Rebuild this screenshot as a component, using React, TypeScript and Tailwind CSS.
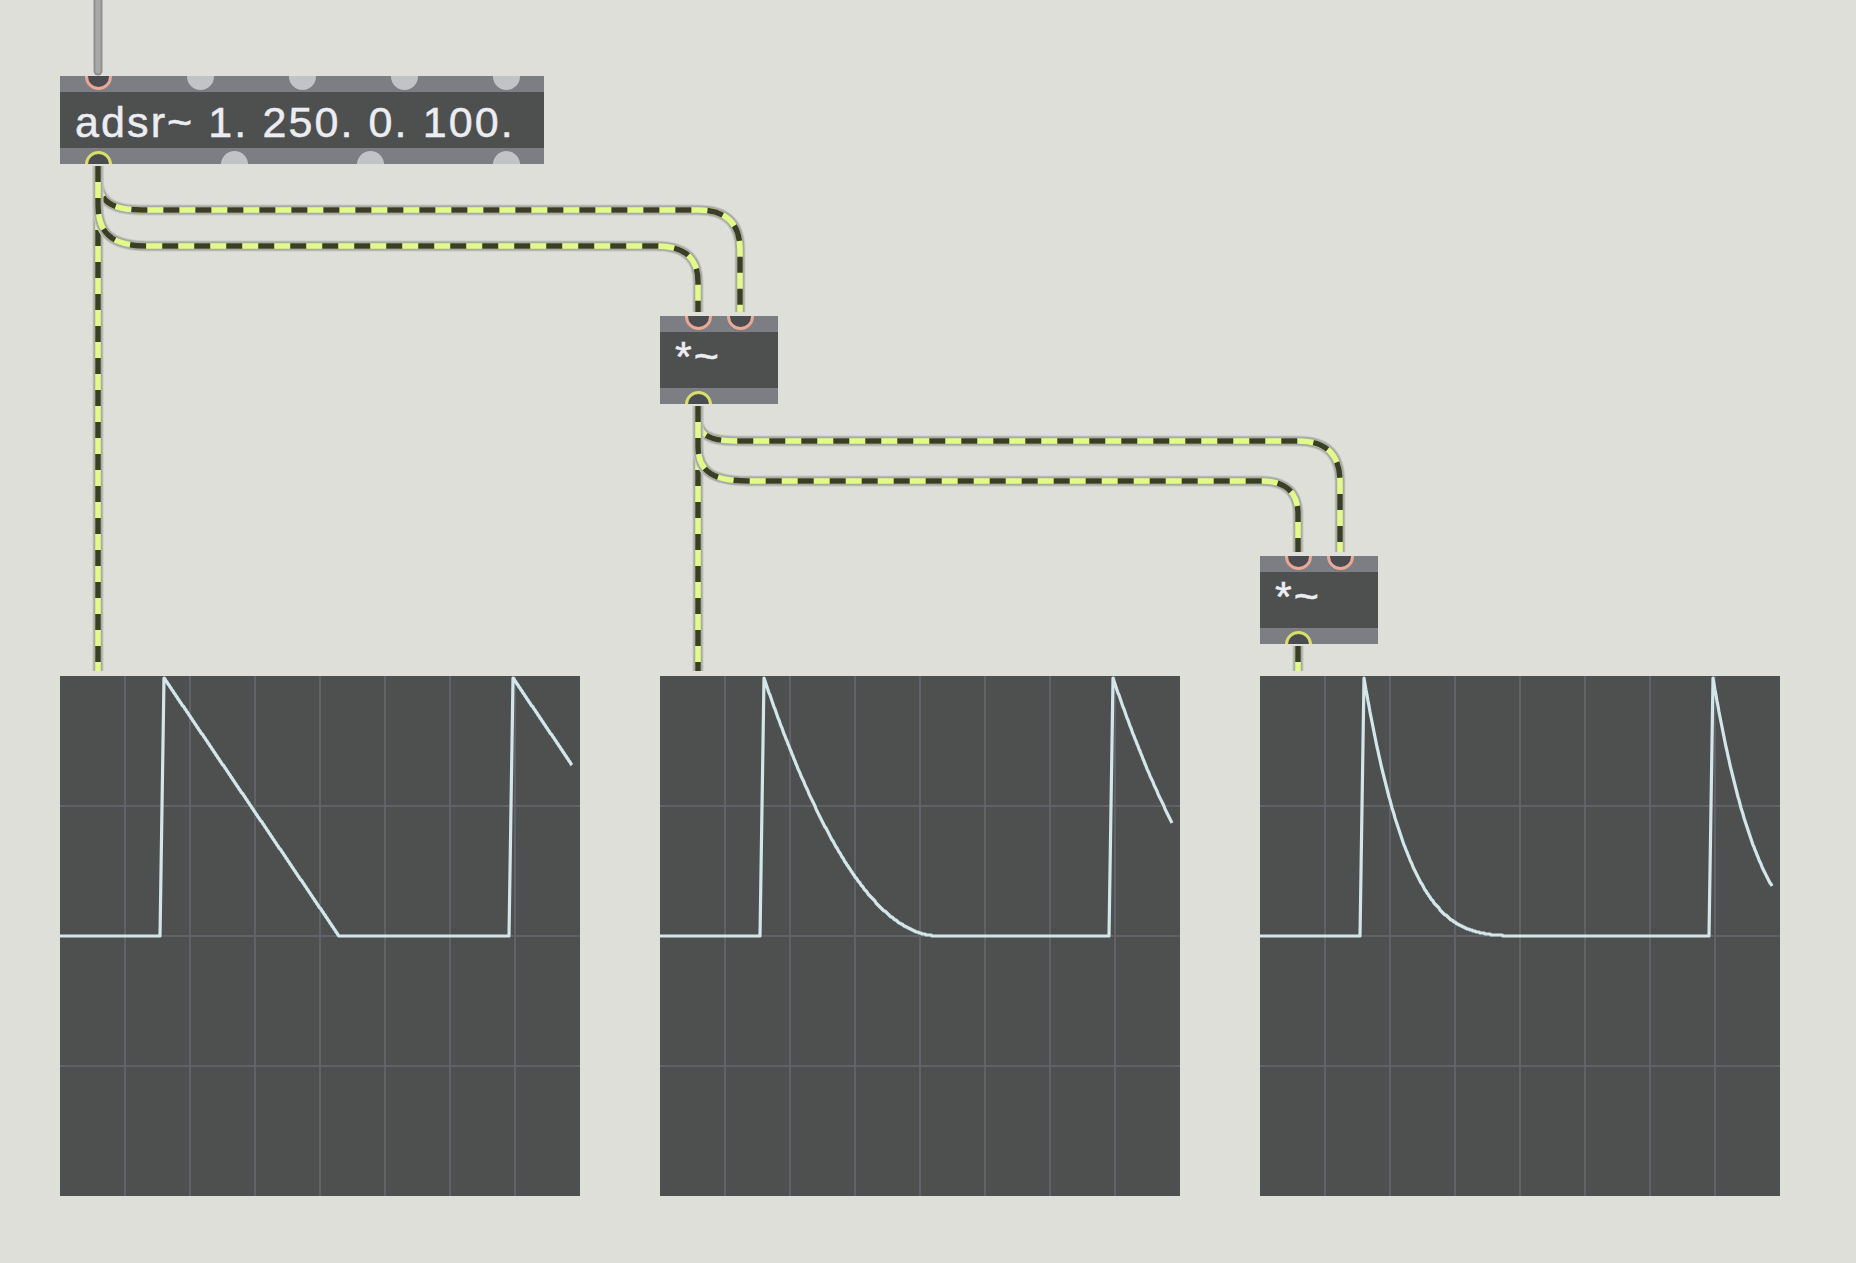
import React from "react";

// Max-style patcher: adsr~ -> *~ -> *~, each feeding a scope~

type PortKind = "hot" | "out" | "idle";

interface Port {
  pos: string;
  kind: PortKind;
}

const RING: Record<PortKind, string> = {
  hot: "border-[3px] border-[#eaa996] bg-[#4a4c51]",
  out: "border-[3px] border-[#d8df6c] bg-[#4a4c51]",
  idle: "bg-[#c2c3c6]",
};

function ObjectBox({
  place,
  text,
  textPad,
  inlets,
  outlets,
}: {
  place: string;
  text: string;
  textPad: string;
  inlets: Port[];
  outlets: Port[];
}) {
  return (
    <div className={`absolute flex flex-col ${place}`}>
      <div className="relative h-4 overflow-hidden bg-[#7d7e83]">
        {inlets.map((p, i) => (
          <span
            key={i}
            className={`absolute top-[-13.5px] h-[27px] w-[27px] rounded-full ${p.pos} ${RING[p.kind]}`}
          />
        ))}
      </div>
      <div
        className={`flex h-14 items-start bg-[#4e5050] pl-[15px] font-['Liberation_Sans',Arial,sans-serif] text-[43px] leading-none tracking-[2.1px] whitespace-nowrap text-[#ececf2] [-webkit-text-stroke:0.5px_#ececf2] ${textPad}`}
      >
        {text}
      </div>
      <div className="relative h-4 overflow-hidden bg-[#7d7e83]">
        {outlets.map((p, i) => (
          <span
            key={i}
            className={`absolute bottom-[-13.5px] h-[27px] w-[27px] rounded-full ${p.pos} ${RING[p.kind]}`}
          />
        ))}
      </div>
    </div>
  );
}

function trace(power: number): string {
  const starts = [100, 449];
  const pts: string[] = [];
  for (let x = 0; x <= 512; x++) {
    let v = 0;
    for (const s of starts) {
      if (x >= s && x < s + 4) v = (x - s) / 4;
      else if (x >= s + 4 && x <= s + 179) v = Math.pow(1 - (x - s - 4) / 175, power);
    }
    pts.push(`${x},${Math.round(260 - 258 * v)}`);
  }
  return pts.join(" ");
}

function Scope({ place, power }: { place: string; power: number }) {
  const cols = [65, 130, 195, 260, 325, 390, 455];
  const rows = [130, 260, 390];
  return (
    <div className={`absolute h-[520px] w-[520px] bg-[#4e5050] ${place}`}>
      <svg width="520" height="520" className="block">
        {cols.map((x) => (
          <line key={"c" + x} x1={x} y1={0} x2={x} y2={520} stroke="#606267" strokeWidth={2} />
        ))}
        {rows.map((y) => (
          <line key={"r" + y} x1={0} y1={y} x2={520} y2={y} stroke="#606267" strokeWidth={2} />
        ))}
        <polyline
          points={trace(power)}
          fill="none"
          stroke="#d3e6ea"
          strokeWidth={3.2}
          strokeLinejoin="round"
        />
      </svg>
    </div>
  );
}

const CORDS = [
  "M98 166 V671",
  "M98 166 V178 C98 200 110 210 142 210 H698 C727 210 740 224 740 250 V312",
  "M98 166 V204 C98 234 112 246 148 246 H656 C686 246 698 259 698 282 V312",
  "M698 406 V671",
  "M698 406 V418 C698 434 708 441 736 441 H1298 C1327 441 1340 455 1340 482 V552",
  "M698 406 V446 C698 471 712 481 748 481 H1262 C1287 481 1298 494 1298 514 V552",
  "M1298 646 V671",
];

function Cords() {
  return (
    <svg width="1856" height="1263" className="pointer-events-none absolute inset-0">
      <line x1={98} y1={-6} x2={98} y2={71} stroke="#8f8f8f" strokeWidth={9} strokeLinecap="round" />
      <line x1={98} y1={-6} x2={98} y2={71} stroke="#a9a9a9" strokeWidth={5} strokeLinecap="round" />
      {CORDS.map((d, i) => (
        <g key={i} fill="none">
          <path d={d} stroke="#c8c9c4" strokeWidth={11} />
          <path d={d} stroke="#a9aaa7" strokeWidth={9} />
          <path d={d} stroke="#e2fa88" strokeWidth={5.5} />
          <path d={d} stroke="#3b3e27" strokeWidth={5.5} strokeDasharray="16 16" />
        </g>
      ))}
    </svg>
  );
}

export default function App() {
  return (
    <div className="relative h-[1263px] w-[1856px] overflow-hidden bg-[#dedfd9]">
      <Cords />

      <ObjectBox
        place="left-[60px] top-[76px] w-[484px]"
        text="adsr~ 1. 250. 0. 100."
        textPad="pt-[8.5px]"
        inlets={[
          { pos: "left-[24.5px]", kind: "hot" },
          { pos: "left-[126.5px]", kind: "idle" },
          { pos: "left-[228.5px]", kind: "idle" },
          { pos: "left-[330.5px]", kind: "idle" },
          { pos: "left-[432.5px]", kind: "idle" },
        ]}
        outlets={[
          { pos: "left-[24.5px]", kind: "out" },
          { pos: "left-[160.5px]", kind: "idle" },
          { pos: "left-[296.5px]", kind: "idle" },
          { pos: "left-[432.5px]", kind: "idle" },
        ]}
      />

      <ObjectBox
        place="left-[660px] top-[316px] w-[118px]"
        text="*~"
        textPad="pt-[2.5px]"
        inlets={[
          { pos: "left-[24.5px]", kind: "hot" },
          { pos: "left-[66.5px]", kind: "hot" },
        ]}
        outlets={[{ pos: "left-[24.5px]", kind: "out" }]}
      />

      <ObjectBox
        place="left-[1260px] top-[556px] w-[118px]"
        text="*~"
        textPad="pt-[2.5px]"
        inlets={[
          { pos: "left-[24.5px]", kind: "hot" },
          { pos: "left-[66.5px]", kind: "hot" },
        ]}
        outlets={[{ pos: "left-[24.5px]", kind: "out" }]}
      />

      <Scope place="left-[60px] top-[676px]" power={1} />
      <Scope place="left-[660px] top-[676px]" power={2} />
      <Scope place="left-[1260px] top-[676px]" power={4} />
    </div>
  );
}
